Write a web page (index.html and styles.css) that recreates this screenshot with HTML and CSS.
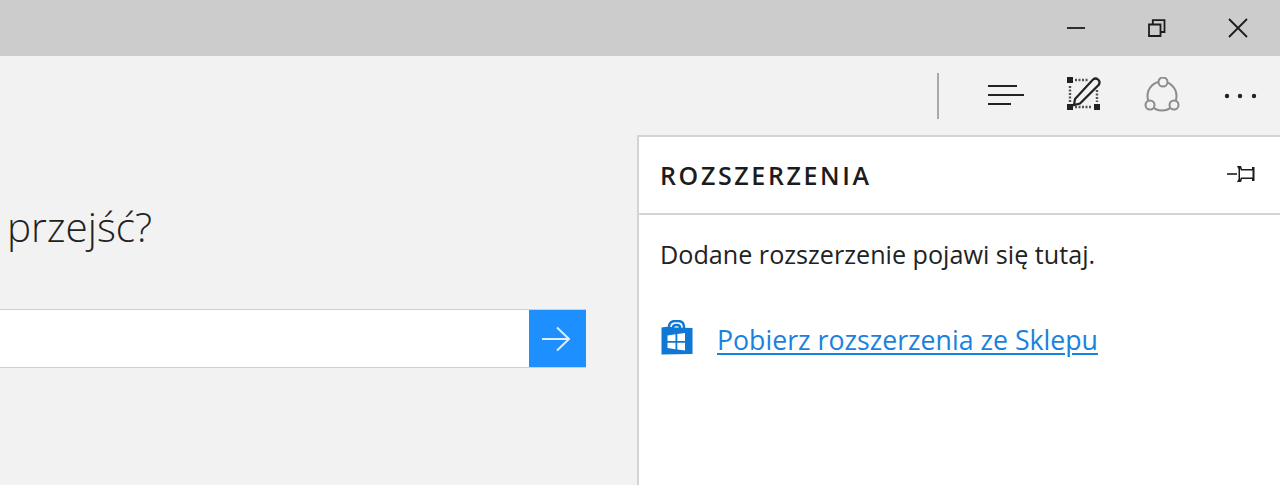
FILE: index.html
```html
<!DOCTYPE html>
<html lang="pl">
<head>
<meta charset="utf-8">
<title>Microsoft Edge</title>
<link rel="stylesheet" href="styles.css">
</head>
<body>
<header class="titlebar">
  <svg class="win-icon" width="22" height="22" viewBox="0 0 22 22"><path d="M2 11H20" stroke="#1c1c1c" stroke-width="1.800" fill="none"/></svg>
  <svg class="win-icon" width="22" height="22" viewBox="0 0 22 22"><path d="M3 7.500H14.500V19H3ZM6.800 7.500V3.200H18.500V15H14.500" stroke="#1c1c1c" stroke-width="1.800" fill="none"/></svg>
  <svg class="win-icon" width="22" height="22" viewBox="0 0 22 22"><path d="M2 2L20 20M20 2L2 20" stroke="#1c1c1c" stroke-width="1.800" fill="none"/></svg>
</header>
<nav class="toolbar">
  <div class="divider"></div>
  <svg class="tool tool-hub" width="38" height="24" viewBox="0 0 38 24"><path d="M1 3H30M1 12H37M1 21H24" stroke="#222" stroke-width="2" fill="none"/></svg>
  <svg class="tool tool-note" width="36" height="36" viewBox="0 0 36 36"><path d="M1 1H7V7H1ZM28 28H34V34H28ZM1 28H7V34H1Z" fill="#222"/><path d="M9 4H22M4 10V26M9 31H26M31 14V26" stroke="#555" stroke-width="2.400" stroke-dasharray="2 1.500" fill="none"/><path d="M9 23L27 3.500Q29.500 1.500 32 3.500T33 8.500L14 27.500L8 29Z" fill="#f2f2f2" stroke="#222" stroke-width="2.200"/></svg>
  <svg class="tool tool-share" width="38" height="36" viewBox="0 0 38 36"><g fill="#f2f2f2" stroke="#8c8c8c" stroke-width="2"><circle cx="19" cy="19" r="14.500" fill="none"/><circle cx="20" cy="5" r="4.500"/><circle cx="7" cy="28" r="4.500"/><circle cx="31" cy="28" r="4.500"/></g></svg>
  <svg class="tool tool-more" width="34" height="6" viewBox="0 0 34 6"><circle cx="3" cy="3" r="2.200" fill="#222"/><circle cx="16" cy="3" r="2.200" fill="#222"/><circle cx="30" cy="3" r="2.200" fill="#222"/></svg>
</nav>
<main class="content">
  <section class="start">
    <h1 class="question">przejść?</h1>
    <form class="search">
      <div class="search-field"></div>
      <div class="search-go">
        <svg class="search-arrow" width="30" height="26" viewBox="0 0 30 26"><path d="M1 13H28M16 1.500L28 13L16 24.500" stroke="#fff" stroke-width="2" fill="none" opacity=".85"/></svg>
      </div>
    </form>
  </section>
  <aside class="panel">
    <div class="panel-head">
      <h2 class="panel-title">ROZSZERZENIA</h2>
      <svg class="pin" width="30" height="18" viewBox="0 0 30 18"><path d="M1 9H11" stroke="#1c1c1c" stroke-width="1.600" fill="none"/><path d="M11 1H15L16 4H26V2H28.500V16H26V14H16L15 17H11L12.500 14V4ZM14 3L14.800 5.500H26.500V12.500H14.800L14 15Z" fill="#1c1c1c" fill-rule="evenodd"/></svg>
    </div>
    <div class="panel-body">
      <p class="panel-text">Dodane rozszerzenie pojawi się tutaj.</p>
      <div class="store">
        <svg class="store-icon" width="34" height="36" viewBox="0 0 34 36"><path d="M9 9V6.500Q9.500 1 15.500 1H18Q23.500 1 24 6.500V9M13 9V7.500Q13 5 16.500 5T20 7.500V9" stroke="#0f78d4" stroke-width="2.400" fill="none"/><path d="M1.500 7.500Q8 5.800 14 7.500L32.500 8V34L1.500 34.500Z" fill="#0f78d4"/><path d="M7.500 15.500L15.500 14.200V21H7.500ZM17.300 14L25 13V21H17.300ZM7.500 22.700H15.500V29.300L7.500 28ZM17.300 22.700H25V30.500L17.300 29.500Z" fill="#fff"/></svg>
        <a class="store-link" href="#">Pobierz rozszerzenia ze Sklepu</a>
      </div>
    </div>
  </aside>
</main>
</body>
</html>
```
FILE: styles.css
```css
* { box-sizing: border-box; }
html, body { height: 100%; }
body {
  margin: 0;
  height: 485px;
  overflow: hidden;
  display: flex;
  flex-direction: column;
  background: #f2f2f2;
  font-family: "Open Sans", "Liberation Sans", sans-serif;
  color: #222;
}
.titlebar {
  flex: none;
  height: 56px;
  background: #cccccc;
  display: flex;
  align-items: center;
  justify-content: flex-end;
  gap: 59px;
  padding: 0 31px 0 0;
}
.win-icon { display: block; }
.toolbar {
  flex: none;
  height: 79px;
  display: flex;
  align-items: center;
  padding: 0 0 0 937px;
}
.divider { width: 2px; height: 46px; background: #a8a8a8; }
.tool { display: block; flex: none; }
.tool-hub { margin: -1px 0 0 48px; }
.tool-note { margin: -3px 0 0 41px; }
.tool-share { margin: -2px 0 0 41px; }
.tool-more { margin: 0 0 0 43px; }
.content { flex: 1; display: flex; min-height: 0; }
.start { width: 637px; flex: none; padding-left: 7px; }
.question {
  margin: 66px 0 0;
  font-size: 40.500px;
  line-height: 52px;
  font-weight: 300;
  color: #222;
}
.search {
  display: flex;
  margin: 56px 51px 0 -7px;
  height: 59px;
  border-top: 1px solid #cfcfcf;
  border-bottom: 1px solid #cfcfcf;
}
.search-field {
  flex: 1;
  background: #fff;
}
.search-go {
  width: 57px;
  background: #1e8fff;
  display: flex;
  align-items: center;
  justify-content: center;
  padding-right: 3px;
}
.panel {
  flex: 1;
  background: #fff;
  border-left: 2px solid #d4d4d4;
  border-top: 2px solid #d4d4d4;
}
.panel-head {
  height: 78px;
  border-bottom: 2px solid #d4d4d4;
  display: flex;
  align-items: center;
  justify-content: space-between;
  padding: 2px 24px 2px 21px;
}
.panel-title {
  margin: 0;
  font-size: 25px;
  font-weight: 600;
  letter-spacing: 2.630px;
  color: #1c1c1c;
}
.pin { margin-top: -2px; }
.panel-body { padding: 22px 0 0 21px; }
.panel-text {
  margin: 0;
  font-size: 25.170px;
  line-height: 34px;
  color: #222;
}
.store {
  display: flex;
  align-items: center;
  gap: 23px;
  margin-top: 51px;
}
.store-icon { display: block; flex: none; margin-top: -4px; }
.store-link {
  font-size: 26.700px;
  line-height: 36px;
  color: #1a82dc;
  text-decoration: underline;
  text-underline-offset: 3px;
}
```
